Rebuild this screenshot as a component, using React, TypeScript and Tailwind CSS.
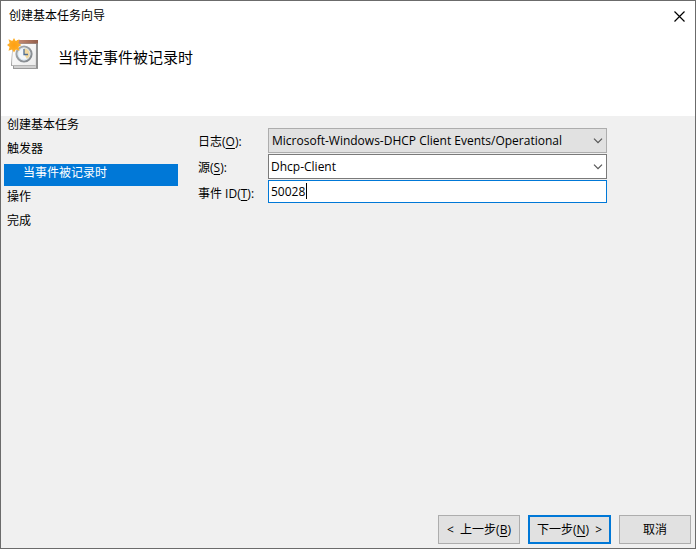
import { useState } from "react";
import type { ReactNode } from "react";

function TaskIcon() {
  return (
    <svg width="34" height="34" viewBox="0 0 34 34" aria-hidden="true" className="shrink-0">
      <defs>
        <linearGradient id="paper" x1="0" y1="0" x2="1" y2="1">
          <stop offset="0" stopColor="#ffffff" />
          <stop offset="1" stopColor="#ececec" />
        </linearGradient>
        <linearGradient id="band" x1="0" y1="0" x2="1" y2="0">
          <stop offset="0" stopColor="#c98d74" />
          <stop offset="1" stopColor="#935f4c" />
        </linearGradient>
        <linearGradient id="rim" x1="0" y1="0" x2="1" y2="1">
          <stop offset="0" stopColor="#a9adb1" />
          <stop offset="1" stopColor="#80858a" />
        </linearGradient>
        <radialGradient id="sun">
          <stop offset="0" stopColor="#ff9f10" />
          <stop offset="1" stopColor="#fdb02c" />
        </radialGradient>
      </defs>
      <path d="M6 4H31V31H6V28H4L5 14Z" fill="#9a9a9a" />
      <path d="M6 6H29V30H7V28H5Z" fill="#d0d0d0" />
      <path d="M6 6H29L28.500 27H5Z" fill="url(#paper)" />
      <path d="M4.500 27.500H28.500" stroke="#b4b4b4" />
      <path d="M30 6V30" stroke="#8c8c8c" strokeWidth="1.500" />
      <path d="M10 2H31V5.500H10Z" fill="url(#band)" />
      <circle cx="17" cy="16" r="7.500" fill="#f2f7fb" stroke="url(#rim)" strokeWidth="2.200" />
      <path d="M17 16V10A6 6 0 0 1 20 21.200Z" fill="#f2d9a0" />
      <circle cx="17" cy="16" r="6" fill="none" stroke="#d3e2ee" strokeWidth="0.800" />
      <path d="M17 11V16.500H21" fill="none" stroke="#4f6f92" strokeWidth="1.300" />
      <path
        d="M7 0L8.700 2.900L12.500 1.200L11.400 5L14.500 7L11.400 9L12.500 12.800L8.900 11.400L7 14.500L5.100 11.400L1.500 12.800L2.600 9L0 7L2.600 5L1.500 1.200L5.300 2.900Z"
        fill="url(#sun)"
      />
    </svg>
  );
}

function Chevron() {
  return (
    <svg
      width="10"
      height="6"
      viewBox="0 0 10 6"
      aria-hidden="true"
      className="pointer-events-none absolute top-1/2 right-1 -translate-y-1/2"
    >
      <path d="M1 0.700L5 4.700L9 0.700" fill="none" stroke="#555555" strokeWidth="1.200" />
    </svg>
  );
}

function Field({ id, label, hotkey, children }: { id: string; label: string; hotkey: string; children: ReactNode }) {
  return (
    <div className="flex items-start">
      <label htmlFor={id} className="w-[70px] shrink-0 pt-1 leading-5">
        {label}(<u className="underline-offset-2">{hotkey}</u>):
      </label>
      <div className="relative min-w-0 flex-1">{children}</div>
    </div>
  );
}

const steps = [
  { name: "创建基本任务" },
  { name: "触发器" },
  { name: "当事件被记录时", current: true },
  { name: "操作" },
  { name: "完成" },
];

export default function App() {
  const [eventId, setEventId] = useState("50028");
  return (
    <div className="flex min-h-screen flex-col border border-[#6b6b6b] bg-[#f0f0f0] font-['Open_Sans','Noto_Sans_CJK_SC',sans-serif] text-[12px] text-black">
      <header className="bg-white pb-[41px]">
        <div className="flex h-[30px] items-center justify-between pr-2.5 pl-2">
          <span>创建基本任务向导</span>
          <button type="button" aria-label="关闭" className="flex h-5 items-center">
            <svg width="11" height="11" viewBox="0 0 11 11" aria-hidden="true">
              <path d="M0.500 0.500L10.500 10.500M10.500 0.500L0.500 10.500" stroke="#000000" strokeWidth="1.200" />
            </svg>
          </button>
        </div>
        <div className="flex h-11 items-start gap-[17px] pt-[7px] pl-1.5">
          <TaskIcon />
          <h1 className="pt-[9px] text-[15px] leading-5">当特定事件被记录时</h1>
        </div>
      </header>

      <div className="flex flex-1">
        <nav className="w-[177px] shrink-0 pl-[3px]">
          <ul className="flex flex-col gap-0.5 leading-[18px]">
            {steps.map((step) => (
              <li
                key={step.name}
                aria-current={step.current ? "step" : undefined}
                className={step.current ? "bg-[#0078d7] pb-1 pl-[19px] text-white" : "pb-1 pl-[3px]"}
              >
                {step.name}
              </li>
            ))}
          </ul>
        </nav>

        <main className="flex min-w-0 flex-1 flex-col justify-between">
          <form className="flex flex-col gap-px pt-3 pr-[88px] pl-5">
            <Field id="log" label="日志" hotkey="O">
              <select id="log" className="block h-[25px] w-full appearance-none border border-[#adadad] bg-[#e1e1e1] pr-5 pl-[3px] outline-none">
                <option>Microsoft-Windows-DHCP Client Events/Operational</option>
              </select>
              <Chevron />
            </Field>
            <Field id="source" label="源" hotkey="S">
              <select id="source" className="block h-[25px] w-full appearance-none border border-[#7a7a7a] bg-white pr-5 pl-[2px] outline-none">
                <option>Dhcp-Client</option>
              </select>
              <Chevron />
            </Field>
            <Field id="event" label="事件 ID" hotkey="T">
              <input
                id="event"
                value={eventId}
                onChange={(e) => setEventId(e.target.value)}
                className="block h-[23px] w-full border border-[#0078d7] bg-white px-[2px] caret-transparent outline-none"
              />
              <span aria-hidden="true" className="pointer-events-none absolute top-[3px] left-[38px] h-4 w-px bg-black" />
            </Field>
          </form>

          <footer className="flex justify-end gap-2 pr-1 pb-1">
            <button type="button" className="h-[29px] w-[82px] border border-[#adadad] bg-[#e1e1e1]">
              &lt;&nbsp; 上一步(<u className="underline-offset-2">B</u>)
            </button>
            <button type="button" className="h-[29px] w-[83px] border-2 border-[#0078d7] bg-[#e1e1e1]">
              下一步(<u className="underline-offset-2">N</u>) &nbsp;&gt;
            </button>
            <button type="button" className="h-[29px] w-[72px] border border-[#adadad] bg-[#e1e1e1]">
              取消
            </button>
          </footer>
        </main>
      </div>
    </div>
  );
}
